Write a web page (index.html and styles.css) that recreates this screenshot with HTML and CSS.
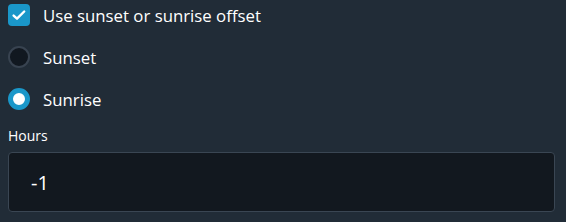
FILE: index.html
```html
<!DOCTYPE html>
<html lang="en">
<head>
    <meta charset="UTF-8">
    <title>Offset settings</title>
    <link rel="stylesheet" href="styles.css">
</head>
<body>

<div class="offset-form">
    <label class="option">
        <span class="checkbox checked">
            <svg viewBox="0 0 16 16" width="16" height="16"><path d="M2.6 8.6l3.4 3.1 7.2-7.2" fill="none" stroke="#fff" stroke-width="2.4" stroke-linecap="round" stroke-linejoin="round"/></svg>
        </span>
        <span class="option-text">Use sunset or sunrise offset</span>
    </label>

    <label class="option">
        <span class="radio"></span>
        <span class="option-text">Sunset</span>
    </label>

    <label class="option">
        <span class="radio checked"></span>
        <span class="option-text">Sunrise</span>
    </label>

    <div class="field">
        <div class="field-label">Hours</div>
        <div class="field-input">-1</div>
    </div>
</div>

</body>
</html>
```

FILE: styles.css
```css
body {
    font-family: "Open Sans", "Noto Sans", sans-serif;
    background-color: #212c37;
    color: #ffffff;
    margin: 0;
    width: 566px;
    height: 222px;
    overflow: hidden;
}

.offset-form {
    padding: 4px 11px 0 8px;
}

.option {
    display: flex;
    align-items: center;
    height: 22px;
    margin-bottom: 20px;
}

.option-text {
    margin-left: 13px;
    font-size: 16.8px;
}

.checkbox {
    width: 22px;
    height: 22px;
    border-radius: 4px;
    background-color: #1a97c9;
    display: flex;
    align-items: center;
    justify-content: center;
    box-sizing: border-box;
}

.radio {
    width: 22px;
    height: 22px;
    border-radius: 50%;
    box-sizing: border-box;
    background-color: #111820;
    border: 2px solid #384350;
}

.radio.checked {
    background-color: #ffffff;
    border: 5.5px solid #1a97c9;
}

.field {
    margin-top: -4px;
}

.field-label {
    font-size: 14px;
    height: 20px;
    line-height: 20px;
    margin-bottom: 6px;
}

.field-input {
    height: 60px;
    box-sizing: border-box;
    border: 1px solid #3a4653;
    border-radius: 4px;
    background-color: #12181f;
    padding-left: 22px;
    font-size: 20px;
    display: flex;
    align-items: center;
}
```
